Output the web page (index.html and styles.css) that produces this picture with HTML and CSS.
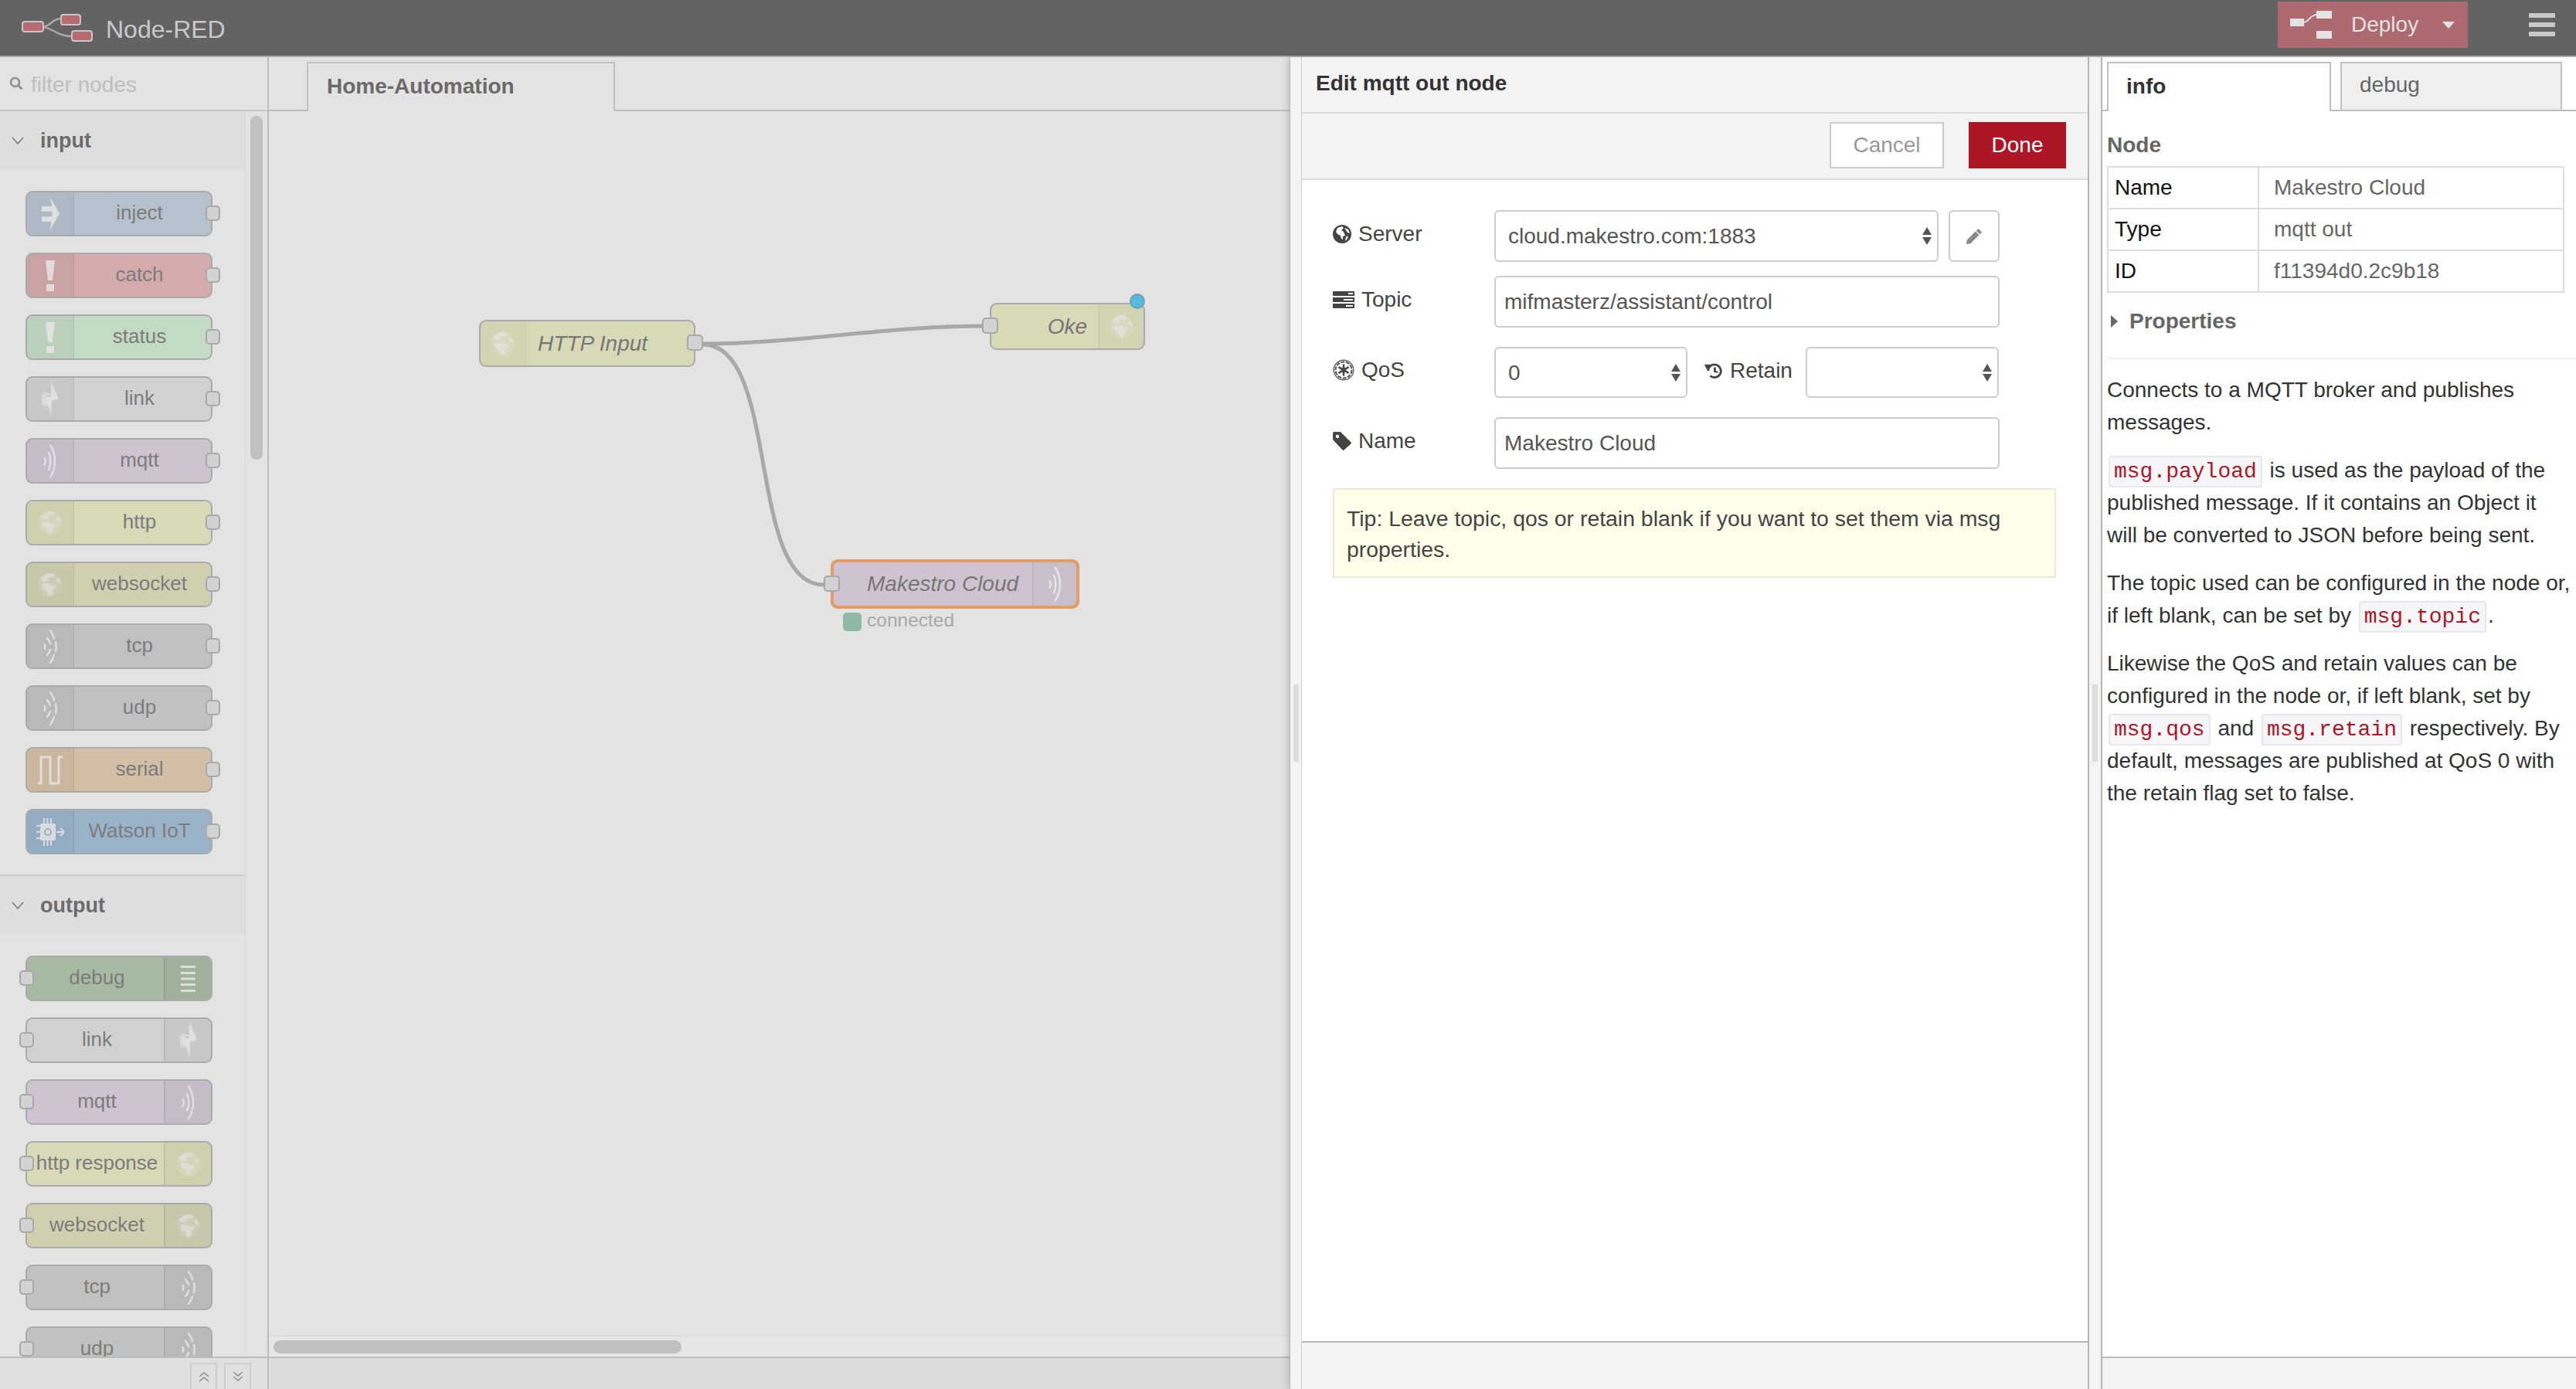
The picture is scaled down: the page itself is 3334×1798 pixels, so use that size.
FILE: index.html
```html
<!DOCTYPE html>
<html lang="en">

<head>
  <meta charset="UTF-8">
  <title>Node-RED</title>
  <link rel="stylesheet" href="styles.css">
</head>

<body>
  <!-- shared icons -->
  <svg class="sprites" aria-hidden="true">
    <symbol id="i-globe" viewBox="0 0 32 32">
      <circle cx="16" cy="16" r="15.500" opacity=".22" />
      <path opacity=".7" d="M15 1C9 2 5 5 3 9l3 2 5 1 3-2-2-3 5-1 4 1 1-4-3-2zM8 14l-3 2 1 5 5 2 2 5 2 3 4-3 1-6 3-2 1-4-5 1-3-2-5-1zM24 8l4 2 2 5-3-1-3-2z" />
    </symbol>
    <symbol id="i-inject" viewBox="0 0 24 46">
      <path d="M11 0l13 23-13 23 2-12H0v-7h14v-7H0v-7h14z" />
    </symbol>
    <symbol id="i-alert" viewBox="0 0 12 40">
      <path d="M0 0h12L9 26H3zM1 31h10v9H1z" />
    </symbol>
    <symbol id="i-link" viewBox="0 0 22 46">
      <path d="M12 0l10 22-9 3-1 21-4-17-3-1 2-2 0-2-2-1 3-3 4 0z" />
      <path d="M3 17a6 6 0 1 0 0 12 6 6 0 0 0 0-12z" opacity=".8" />
      <path d="M0 16l12 2v-2l-8-2zM0 30l12-2v2l-8 2z" opacity=".8" />
    </symbol>
    <symbol id="i-mqtt" viewBox="0 0 18 46">
      <g fill="none" stroke="currentColor" stroke-width="2.500" stroke-linecap="round">
        <path d="M9 2c8 12 8 30 0 42" />
        <path d="M7 12c3 7 3 15 0 22" />
        <path d="M1.500 19c2 3 2 6 0 9" />
      </g>
    </symbol>
    <symbol id="i-tcp" viewBox="0 0 18 46">
      <g fill="none" stroke="currentColor" stroke-width="2.500" stroke-linecap="round">
        <path d="M9 2c2 3 4 6 5 10M16 17c1 4 1 8 0 12M14 34c-1 4-3 7-5 10" />
        <path d="M5 12c2 2 3 4 4 7M9 27c-1 3-2 5-4 7" />
        <path d="M1.500 20c1 2 1 4 0 6" />
      </g>
    </symbol>
    <symbol id="i-serial" viewBox="0 0 32 38">
      <path d="M0 36h4V2h12v34h11V2h5" fill="none" stroke="currentColor" stroke-width="3" />
    </symbol>
    <symbol id="i-watson" viewBox="0 0 36 36">
      <g fill="none" stroke="currentColor" stroke-width="2">
        <path d="M10 0v7M14.500 0v7M19 0v7M10 29v7M14.500 29v7M19 29v7M0 10h5M0 18h5M0 26h5" />
        <path d="M26 18h9M31 13l5 5-5 5" />
      </g>
      <path d="M5 9a2 2 0 0 1 2-2h16a2 2 0 0 1 2 2v18a2 2 0 0 1-2 2H7a2 2 0 0 1-2-2z" />
      <circle cx="15" cy="18" r="4" fill="none" stroke="#9ab3c9" stroke-width="2" />
    </symbol>
    <symbol id="i-debug" viewBox="0 0 19 34">
      <path d="M0 0h19v3H0zM0 8h19v3H0zM0 15.500h19v3H0zM0 23h19v3H0zM0 31h19v3H0z" />
    </symbol>
  </svg>

  <div class="app">
    <header class="topbar">
      <div class="brand">
        <svg class="logo" viewBox="0 0 92 36">
          <path d="M26 17c12 0 12-11 26-11M26 17c14 0 18 12 40 12" fill="none" stroke="#a9a9a9" stroke-width="2.500" />
          <rect x="1" y="10" width="27" height="13" rx="3" fill="#b56b6f" stroke="#c6c6c6" stroke-width="2" />
          <rect x="51" y="1" width="25" height="13" rx="3" fill="#b56b6f" stroke="#c6c6c6" stroke-width="2" />
          <rect x="65" y="22" width="26" height="13" rx="3" fill="#b56b6f" stroke="#c6c6c6" stroke-width="2" />
        </svg>
        <span class="brand-name">Node-RED</span>
      </div>
      <div class="topbar-actions">
        <div class="deploy">
          <svg class="deploy-icon" viewBox="0 0 54 36">
            <path d="M16 15c10 0 8-10 20-10" fill="none" stroke="#e3e3e3" stroke-width="2" />
            <path d="M0 10h18v10H0zM34 0h20v10H34zM34 26h20v10H34z" fill="#e3e3e3" />
          </svg>
          <span class="deploy-label">Deploy</span>
          <span class="deploy-caret"></span>
        </div>
        <div class="menu-button"><span></span><span></span><span></span></div>
      </div>
    </header>

    <div class="columns">
      <aside class="palette">
        <div class="palette-search">
          <svg class="search-icon" viewBox="0 0 18 18">
            <circle cx="7.500" cy="7.500" r="5.500" fill="none" stroke="#8f8f8f" stroke-width="2.500" />
            <path d="M11.500 11.500l5 5" stroke="#8f8f8f" stroke-width="3" />
          </svg>
          <span class="search-text">filter nodes</span>
        </div>
        <div class="palette-scroll">
          <div class="palette-list">
            <div class="category">
              <svg class="chevron" viewBox="0 0 16 10"><path d="M1 1l7 8 7-8" /></svg>
              <span>input</span>
            </div>
            <div class="category-nodes">
              <div class="pnode in c-inject"><div class="pnode-icon"><svg class="ic-inject"><use href="#i-inject" /></svg></div><div class="pnode-label">inject</div><i class="port"></i></div>
              <div class="pnode in c-catch"><div class="pnode-icon"><svg class="ic-alert"><use href="#i-alert" /></svg></div><div class="pnode-label">catch</div><i class="port"></i></div>
              <div class="pnode in c-status"><div class="pnode-icon"><svg class="ic-alert"><use href="#i-alert" /></svg></div><div class="pnode-label">status</div><i class="port"></i></div>
              <div class="pnode in c-link"><div class="pnode-icon"><svg class="ic-link"><use href="#i-link" /></svg></div><div class="pnode-label">link</div><i class="port"></i></div>
              <div class="pnode in c-mqtt"><div class="pnode-icon"><svg class="ic-arcs"><use href="#i-mqtt" /></svg></div><div class="pnode-label">mqtt</div><i class="port"></i></div>
              <div class="pnode in c-http"><div class="pnode-icon"><svg class="ic-globe"><use href="#i-globe" /></svg></div><div class="pnode-label">http</div><i class="port"></i></div>
              <div class="pnode in c-socket"><div class="pnode-icon"><svg class="ic-globe"><use href="#i-globe" /></svg></div><div class="pnode-label">websocket</div><i class="port"></i></div>
              <div class="pnode in c-grey"><div class="pnode-icon"><svg class="ic-arcs"><use href="#i-tcp" /></svg></div><div class="pnode-label">tcp</div><i class="port"></i></div>
              <div class="pnode in c-grey"><div class="pnode-icon"><svg class="ic-arcs"><use href="#i-tcp" /></svg></div><div class="pnode-label">udp</div><i class="port"></i></div>
              <div class="pnode in c-serial"><div class="pnode-icon"><svg class="ic-serial"><use href="#i-serial" /></svg></div><div class="pnode-label">serial</div><i class="port"></i></div>
              <div class="pnode in c-watson"><div class="pnode-icon"><svg class="ic-watson"><use href="#i-watson" /></svg></div><div class="pnode-label">Watson IoT</div><i class="port"></i></div>
            </div>
            <div class="category category-next">
              <svg class="chevron" viewBox="0 0 16 10"><path d="M1 1l7 8 7-8" /></svg>
              <span>output</span>
            </div>
            <div class="category-nodes">
              <div class="pnode out c-debug"><i class="port"></i><div class="pnode-label">debug</div><div class="pnode-icon"><svg class="ic-debug"><use href="#i-debug" /></svg></div></div>
              <div class="pnode out c-link"><i class="port"></i><div class="pnode-label">link</div><div class="pnode-icon"><svg class="ic-link"><use href="#i-link" /></svg></div></div>
              <div class="pnode out c-mqtt"><i class="port"></i><div class="pnode-label">mqtt</div><div class="pnode-icon"><svg class="ic-arcs"><use href="#i-mqtt" /></svg></div></div>
              <div class="pnode out c-http"><i class="port"></i><div class="pnode-label">http response</div><div class="pnode-icon"><svg class="ic-globe"><use href="#i-globe" /></svg></div></div>
              <div class="pnode out c-socket"><i class="port"></i><div class="pnode-label">websocket</div><div class="pnode-icon"><svg class="ic-globe"><use href="#i-globe" /></svg></div></div>
              <div class="pnode out c-grey"><i class="port"></i><div class="pnode-label">tcp</div><div class="pnode-icon"><svg class="ic-arcs"><use href="#i-tcp" /></svg></div></div>
              <div class="pnode out c-grey"><i class="port"></i><div class="pnode-label">udp</div><div class="pnode-icon"><svg class="ic-arcs"><use href="#i-tcp" /></svg></div></div>
            </div>
          </div>
          <div class="palette-track"><div class="palette-thumb"></div></div>
        </div>
        <div class="palette-footer">
          <div class="mini-button"><svg viewBox="0 0 14 14"><path d="M1 7l6-5 6 5M1 13l6-5 6 5" /></svg></div>
          <div class="mini-button"><svg viewBox="0 0 14 14"><path d="M1 1l6 5 6-5M1 7l6 5 6-5" /></svg></div>
        </div>
      </aside>

      <main class="workspace">
        <div class="tabs workspace-tabs">
          <div class="tab workspace-tab">Home-Automation</div>
        </div>
        <div class="canvas">
          <svg class="wires">
            <path d="M562 301C680 301 800 278 923 278" />
            <path d="M562 302C662 302 618 613 718 613" />
          </svg>

          <div class="flow-node flow-http">
            <div class="flow-icon"><svg class="ic-globe"><use href="#i-globe" /></svg></div>
            <div class="flow-label">HTTP Input</div>
            <i class="port"></i>
          </div>

          <div class="flow-node flow-oke">
            <i class="port"></i>
            <div class="flow-label">Oke</div>
            <div class="flow-icon"><svg class="ic-globe"><use href="#i-globe" /></svg></div>
            <b class="changed-dot"></b>
          </div>

          <div class="flow-node flow-mqtt">
            <i class="port"></i>
            <div class="flow-label">Makestro Cloud</div>
            <div class="flow-icon"><svg class="ic-arcs"><use href="#i-mqtt" /></svg></div>
          </div>

          <div class="flow-status">
            <b class="status-dot"></b>
            <span>connected</span>
          </div>
        </div>
        <div class="canvas-scroll"><div class="canvas-thumb"></div></div>
        <div class="workspace-footer"></div>
      </main>

      <section class="tray">
        <div class="tray-edge"><div class="handle"></div></div>
        <div class="tray-main">
          <div class="tray-header">Edit mqtt out node</div>
          <div class="tray-toolbar">
            <button class="btn btn-cancel">Cancel</button>
            <button class="btn btn-done">Done</button>
          </div>
          <form class="tray-body">
            <div class="form-row row-server">
              <label class="form-label">
                <svg class="label-icon" viewBox="0 0 24 24">
                  <circle cx="12" cy="12" r="12" fill="#444" />
                  <path d="M6 4l6-2 2 2-3 3 3 2 2 5-3 1 0 4-2-1-1-4-4-2-2-3zM15 4l5 2 2 5-3-1zM17 16l3-2-1 4-3 3z" fill="#fff" />
                </svg>
                Server
              </label>
              <div class="select-wrap select-server">
                <select><option>cloud.makestro.com:1883</option></select>
              </div>
              <div class="edit-button">
                <svg viewBox="0 0 24 24"><path d="M18 1l5 5-3 3-5-5zM14 5l5 5L7 22l-6 1 1-6z" fill="#8a8a8a" /></svg>
              </div>
            </div>
            <div class="form-row row-topic">
              <label class="form-label">
                <svg class="label-icon icon-tasks" viewBox="0 0 28 22">
                  <path d="M1 0h26a1 1 0 0 1 1 1v5H0V1a1 1 0 0 1 1-1zM0 8h28v6H0zM0 16h28v5a1 1 0 0 1-1 1H1a1 1 0 0 1-1-1z" fill="#444" />
                  <path d="M20 2h6v2h-6zM14 10h12v2H14zM17 18h9v2h-9z" fill="#fff" />
                </svg>
                Topic
              </label>
              <input class="text-input" value="mifmasterz/assistant/control">
            </div>
            <div class="form-row row-qos">
              <label class="form-label">
                <svg class="label-icon icon-empire" viewBox="0 0 28 28">
                  <circle cx="14" cy="14" r="12.800" fill="none" stroke="#666" stroke-width="1.500" />
                  <circle cx="14" cy="14" r="10.500" fill="none" stroke="#555" stroke-width="2" stroke-dasharray="5 1.500" />
                  <path d="M14 6.500v15M7.500 10.200l13 7.600M20.500 10.200l-13 7.600" stroke="#444" stroke-width="2.500" />
                  <circle cx="14" cy="14" r="3" fill="#444" />
                </svg>
                QoS
              </label>
              <div class="select-wrap select-small">
                <select><option>0</option></select>
              </div>
              <label class="form-label label-retain">
                <svg class="label-icon" viewBox="0 0 26 24">
                  <path d="M5 12a9 9 0 1 1 3 7" fill="none" stroke="#444" stroke-width="3" />
                  <path d="M0 3l9 0-6 7zM13 7h3v6h-3z" fill="#444" />
                  <path d="M13 11l6 2v2l-6-1z" fill="#444" />
                </svg>
                Retain
              </label>
              <div class="select-wrap select-small">
                <select><option></option></select>
              </div>
            </div>
            <div class="form-row row-name">
              <label class="form-label">
                <svg class="label-icon" viewBox="0 0 24 24">
                  <path d="M0 2a2 2 0 0 1 2-2h8l13 13a2 2 0 0 1 0 3l-8 7a2 2 0 0 1-3 0L0 10z" fill="#444" />
                  <circle cx="6" cy="6" r="2.200" fill="#fff" />
                </svg>
                Name
              </label>
              <input class="text-input" value="Makestro Cloud">
            </div>
            <div class="form-tip">Tip: Leave topic, qos or retain blank if you want to set them via msg properties.</div>
          </form>
          <div class="tray-footer"></div>
        </div>
      </section>

      <div class="separator"><div class="handle"></div></div>

      <aside class="sidebar">
        <div class="tabs sidebar-tabs">
          <div class="tab info-tab">info</div>
          <div class="tab debug-tab">debug</div>
        </div>
        <div class="sidebar-content">
          <h3 class="info-heading">Node</h3>
          <table class="info-table">
            <tr><td>Name</td><td>Makestro Cloud</td></tr>
            <tr><td>Type</td><td>mqtt out</td></tr>
            <tr><td>ID</td><td>f11394d0.2c9b18</td></tr>
          </table>
          <div class="info-properties"><span class="arrow-right"></span>Properties</div>
          <div class="info-help">
            <p>Connects to a MQTT broker and publishes messages.</p>
            <p><code>msg.payload</code> is used as the payload of the published message. If it contains an Object it<br>will be converted to JSON before being sent.</p>
            <p>The topic used can be configured in the node or,<br>if left blank, can be set by <code>msg.topic</code>.</p>
            <p>Likewise the QoS and retain values can be configured in the node or, if left blank, set by <code>msg.qos</code> and <code>msg.retain</code> respectively. By default, messages are published at QoS 0 with the retain flag set to false.</p>
          </div>
        </div>
        <div class="sidebar-footer"></div>
      </aside>
    </div>
  </div>
</body>

</html>
```

FILE: styles.css
```css
/* Base */

* {
  box-sizing: border-box;
}

html,
body {
  margin: 0;
  height: 100%;
  overflow: hidden;
}

body {
  font-family: "Liberation Sans", Arial, sans-serif;
  font-size: 28px;
  color: #333;
  background: #e3e3e3;
}

.sprites {
  display: none;
}

.app {
  display: flex;
  flex-direction: column;
  height: 100vh;
}

/* Top bar */

.topbar {
  height: 74px;
  flex-shrink: 0;
  background: #636363;
  border-bottom: 2px solid #ababab;
  display: flex;
  justify-content: space-between;
  padding-left: 28px;
  padding-right: 27px;
}

.brand {
  display: flex;
  align-items: center;
  gap: 17px;
  color: #c9c9c9;
  font-size: 32px;
}

.brand-name {
  padding-top: 5px;
}

.logo {
  width: 92px;
  height: 36px;
}

.topbar-actions {
  display: flex;
  align-items: flex-start;
  gap: 79px;
}

.deploy {
  width: 246px;
  height: 60px;
  margin-top: 2px;
  background: #ad6a70;
  color: #e2e2e2;
  display: flex;
  align-items: center;
  padding-left: 16px;
}

.deploy-icon {
  width: 54px;
  height: 36px;
}

.deploy-label {
  margin-left: 25px;
}

.deploy-caret {
  margin-left: 31px;
  border-left: 8px solid transparent;
  border-right: 8px solid transparent;
  border-top: 9px solid #e2e2e2;
}

.menu-button {
  width: 34px;
  margin-top: 17px;
  display: flex;
  flex-direction: column;
  gap: 6px;
}

.menu-button span {
  height: 6px;
  border-radius: 1px;
  background: #c9c9c9;
}

.columns {
  flex: 1;
  min-height: 0;
  display: flex;
}

/* Palette */

.palette {
  width: 348px;
  flex-shrink: 0;
  display: flex;
  flex-direction: column;
  border-right: 2px solid #bdbdbd;
}

.palette-search {
  height: 70px;
  flex-shrink: 0;
  border-bottom: 2px solid #c6c6c6;
  display: flex;
  align-items: center;
  padding: 0 0 0 12px;
  gap: 10px;
}

.search-icon {
  width: 18px;
  height: 18px;
}

.search-text {
  padding-top: 4px;
  color: #bfbfbf;
}

.palette-scroll {
  flex: 1;
  min-height: 0;
  overflow: hidden;
  display: flex;
}

.palette-list {
  width: 317px;
  flex-shrink: 0;
}

.palette-track {
  flex: 1;
  border-left: 1px solid #dadada;
  padding: 6px 6px 0 6px;
}

.palette-thumb {
  height: 445px;
  border-radius: 8px;
  background: #c1c1c1;
}

.category {
  height: 76px;
  background: #dedede;
  display: flex;
  align-items: center;
  padding-left: 15px;
  font-size: 27px;
  font-weight: bold;
  color: #6c6c6c;
}

.category-next {
  height: 78px;
  margin-top: -1px;
  border-top: 2px solid #cdcdcd;
}

.chevron {
  width: 16px;
  height: 10px;
  margin-right: 21px;
  fill: none;
  stroke: #7c7c7c;
  stroke-width: 1.6;
}

.category-nodes {
  padding: 27px 0 27px 33px;
  display: flex;
  flex-direction: column;
  gap: 21px;
}

.pnode {
  position: relative;
  width: 242px;
  height: 59px;
  flex-shrink: 0;
  border: 2px solid #ababab;
  border-radius: 9px;
  display: flex;
  font-size: 26px;
  color: #7c7c7c;
}

.pnode-icon {
  width: 61px;
  flex-shrink: 0;
  display: flex;
  align-items: center;
  justify-content: center;
  background: rgba(0, 0, 0, 0.04);
  color: #e6e6e6;
  fill: #e6e6e6;
}

.pnode-icon svg {
  opacity: 0.85;
}

.pnode.in .pnode-icon {
  border-right: 1px solid rgba(0, 0, 0, 0.08);
  border-radius: 7px 0 0 7px;
}

.pnode.out .pnode-icon {
  border-left: 2px solid rgba(0, 0, 0, 0.08);
  border-radius: 0 7px 7px 0;
}

.pnode-label {
  flex: 1;
  min-width: 0;
  white-space: nowrap;
  display: flex;
  align-items: center;
  justify-content: center;
  padding-bottom: 2px;
}

.pnode.in .pnode-label {
  padding-right: 8px;
}

.pnode.out .pnode-label {
  padding-left: 4px;
}

.port {
  position: absolute;
  width: 19px;
  height: 20px;
  border: 2px solid #a9a9a9;
  border-radius: 5px;
  background: #d2d2d2;
}

.pnode .port {
  top: 17px;
}

.pnode.in .port {
  right: -12px;
}

.pnode.out .port {
  left: -10px;
}

.ic-inject {
  width: 23px;
  height: 45px;
}

.ic-alert {
  width: 12px;
  height: 40px;
}

.ic-link {
  width: 22px;
  height: 46px;
}

.ic-arcs {
  width: 18px;
  height: 46px;
}

.ic-globe {
  width: 32px;
  height: 32px;
}

.ic-serial {
  width: 32px;
  height: 38px;
}

.ic-watson {
  width: 36px;
  height: 36px;
}

.ic-debug {
  width: 19px;
  height: 34px;
}

.c-inject { background: #b5c1cd; }
.c-catch { background: #d4aaaa; }
.c-status { background: #c3dac3; }
.c-link { background: #d1d1d1; }
.c-mqtt { background: #cfc3d2; }
.c-http { background: #d8d9b6; }
.c-socket { background: #d0d0b0; }
.c-grey { background: #c1c1c1; }
.c-serial { background: #d3bfa5; }
.c-watson { background: #9ab3c9; }
.c-debug { background: #a7baa2; }

.palette-footer {
  height: 42px;
  flex-shrink: 0;
  border-top: 2px solid #bdbdbd;
  display: flex;
  justify-content: flex-end;
  gap: 9px;
  padding: 6px 21px 0 0;
  background: #e0e0e0;
}

.mini-button {
  width: 35px;
  border: 2px solid #cdcdcd;
  border-bottom: none;
  display: flex;
  align-items: center;
  justify-content: center;
}

.mini-button svg {
  width: 14px;
  height: 14px;
  fill: none;
  stroke: #8a8a8a;
  stroke-width: 1.5;
}

/* Tabs */

.tabs {
  height: 70px;
  flex-shrink: 0;
  padding-top: 6px;
  border-bottom: 2px solid #bdbdbd;
  display: flex;
}

.tab {
  height: 64px;
  border: 2px solid #c0c0c0;
  border-bottom: none;
}

.workspace-tabs {
  padding-left: 49px;
}

.workspace-tab {
  width: 399px;
  padding: 14px 0 0 24px;
  font-weight: bold;
  color: #6a6a6a;
  background: #e3e3e3;
}

/* Workspace */

.workspace {
  width: 1321px;
  flex-shrink: 0;
  display: flex;
  flex-direction: column;
}

.canvas {
  position: relative;
  flex: 1;
  min-height: 0;
}

.wires {
  position: absolute;
  left: 0;
  top: 0;
  width: 100%;
  height: 100%;
  fill: none;
  stroke: #a8a8a8;
  stroke-width: 5;
}

.flow-node {
  position: absolute;
  height: 61px;
  border: 2px solid #ababab;
  border-radius: 9px;
  display: flex;
  font-style: italic;
  color: #777;
}

.flow-icon {
  flex-shrink: 0;
  display: flex;
  align-items: center;
  justify-content: center;
  background: rgba(0, 0, 0, 0.02);
  fill: #e6e6e4;
  color: #e6e6e4;
}

.flow-label {
  flex: 1;
  display: flex;
  align-items: center;
  white-space: nowrap;
}

.flow-node .port {
  top: 17px;
  width: 21px;
  height: 21px;
}

.flow-http {
  left: 272px;
  top: 270px;
  width: 280px;
  background: #d8d9b6;
}

.flow-http .flow-icon {
  width: 59px;
  border-right: 1px solid rgba(0, 0, 0, 0.06);
}

.flow-http .flow-label {
  padding-left: 15px;
}

.flow-http .port {
  right: -12px;
}

.flow-oke {
  left: 933px;
  top: 248px;
  width: 201px;
  background: #d8d9b6;
}

.flow-oke .flow-icon {
  width: 58px;
  border-left: 1px solid rgba(0, 0, 0, 0.06);
}

.flow-oke .flow-label {
  justify-content: flex-end;
  padding-right: 15px;
}

.flow-oke .port {
  left: -12px;
}

.changed-dot {
  position: absolute;
  right: -2px;
  top: -14px;
  width: 20px;
  height: 20px;
  border: 2px solid #6fa3ba;
  border-radius: 50%;
  background: #59b9de;
}

.flow-mqtt {
  left: 727px;
  top: 580px;
  width: 322px;
  height: 64px;
  border: 4px solid #e39d63;
  background: #cfc3d2;
}

.flow-mqtt .flow-icon {
  width: 57px;
  border-left: 2px solid rgba(0, 0, 0, 0.05);
}

.flow-mqtt .flow-label {
  padding-left: 43px;
}

.flow-mqtt .port {
  left: -13px;
  top: 17px;
}

.flow-status {
  position: absolute;
  left: 743px;
  top: 647px;
  display: flex;
  align-items: center;
  gap: 7px;
  font-size: 24.500px;
  color: #a8a8a8;
}

.flow-status span {
  position: relative;
  top: -2px;
}

.status-dot {
  width: 24px;
  height: 24px;
  border-radius: 5px;
  background: #8fb9a5;
}

.canvas-scroll {
  height: 28px;
  flex-shrink: 0;
  border-top: 2px solid #dcdcdc;
  background: #e6e6e6;
  padding: 5px 0 0 6px;
}

.canvas-thumb {
  width: 528px;
  height: 17px;
  border-radius: 9px;
  background: #c0c0c0;
}

.workspace-footer {
  height: 42px;
  flex-shrink: 0;
  border-top: 2px solid #bdbdbd;
  background: #dcdcdc;
}

/* Edit tray */

.tray {
  width: 1035px;
  flex-shrink: 0;
  display: flex;
  border-left: 1px solid #b5b5b5;
  border-right: 2px solid #b5b5b5;
  background: #f3f3f3;
  box-shadow: -3px 0 8px rgba(0, 0, 0, 0.14);
}

.tray-edge,
.separator {
  display: flex;
  align-items: center;
  justify-content: center;
  flex-shrink: 0;
  background: #f3f3f3;
}

.tray-edge {
  width: 15px;
  border-right: 1px solid #d0d0d0;
}

.handle {
  width: 7px;
  height: 100px;
  background: #dcdcdc;
}

.tray-main {
  flex: 1;
  min-width: 0;
  display: flex;
  flex-direction: column;
}

.tray-header {
  height: 73px;
  flex-shrink: 0;
  padding: 18px 0 0 18px;
  border-bottom: 2px solid #dcdcdc;
  font-weight: bold;
}

.tray-toolbar {
  height: 86px;
  flex-shrink: 0;
  border-bottom: 2px solid #dcdcdc;
  display: flex;
  justify-content: flex-end;
  align-items: flex-start;
  gap: 32px;
  padding: 11px 28px 0 0;
}

.btn {
  height: 60px;
  font: inherit;
  border-radius: 0;
}

.btn-cancel {
  width: 148px;
  background: #fff;
  border: 2px solid #ccc;
  color: #999;
}

.btn-done {
  width: 126px;
  background: #ad1625;
  border: none;
  color: #fff;
}

.tray-body {
  flex: 1;
  min-height: 0;
  background: #fff;
  padding: 39px 0 0 40px;
}

.form-row {
  display: flex;
  align-items: center;
  width: 863px;
}

.row-server {
  height: 67px;
  margin-bottom: 18px;
}

.row-topic {
  height: 67px;
  margin-bottom: 25px;
}

.row-qos {
  height: 66px;
  margin-bottom: 25px;
}

.row-name {
  height: 67px;
  margin-bottom: 25px;
}

.form-label {
  width: 209px;
  flex-shrink: 0;
  display: flex;
  align-items: center;
  gap: 9px;
  padding-bottom: 6px;
  color: #444;
}

.label-icon {
  width: 24px;
  height: 24px;
  flex-shrink: 0;
}

.icon-tasks {
  width: 28px;
  height: 22px;
}

.icon-empire {
  width: 28px;
  height: 28px;
}

.label-retain {
  width: auto;
  margin: 0 17px 0 22px;
  padding-bottom: 4px;
}

.select-wrap {
  position: relative;
  height: 100%;
}

.select-wrap::before,
.select-wrap::after {
  content: "";
  position: absolute;
  right: 9px;
  border-left: 6.500px solid transparent;
  border-right: 6.500px solid transparent;
}

.select-wrap::before {
  top: 22px;
  border-bottom: 10px solid #555;
}

.select-wrap::after {
  top: 35px;
  border-top: 10px solid #555;
}

.select-wrap select,
.text-input {
  width: 100%;
  height: 100%;
  font: inherit;
  color: #555;
  background: #fff;
  border: 2px solid #ccc;
  border-radius: 6px;
  outline: none;
}

.select-wrap select {
  appearance: none;
  padding: 0 0 0 16px;
}

.text-input {
  flex: 1;
  min-width: 0;
  padding: 0 0 0 11px;
}

.select-server {
  width: 575px;
}

.select-small {
  width: 250px;
}

.edit-button {
  width: 66px;
  height: 100%;
  margin-left: 13px;
  border: 2px solid #ccc;
  border-radius: 6px;
  display: flex;
  align-items: center;
  justify-content: center;
}

.edit-button svg {
  width: 22px;
  height: 22px;
}

.form-tip {
  width: 936px;
  height: 116px;
  border: 2px solid #e9e9dc;
  background: #ffffea;
  padding: 17px 16px 0 16px;
  font-size: 28.400px;
  line-height: 40px;
  color: #444;
}

.tray-footer {
  height: 62px;
  flex-shrink: 0;
  border-top: 2px solid #b8b8b8;
}

.separator {
  width: 15px;
}

/* Sidebar */

.sidebar {
  flex: 1;
  min-width: 0;
  display: flex;
  flex-direction: column;
  background: #fff;
  border-left: 2px solid #b5b5b5;
}

.sidebar-tabs {
  background: #fff;
  padding-left: 6px;
}

.info-tab {
  width: 290px;
  height: 64px;
  background: #fff;
  padding: 14px 0 0 23px;
  font-weight: bold;
}

.debug-tab {
  width: 287px;
  height: 62px;
  margin-left: 12px;
  background: #efefef;
  padding: 12px 0 0 23px;
  color: #666;
}

.sidebar-content {
  flex: 1;
  min-height: 0;
  overflow: hidden;
  padding: 0 0 0 6px;
}

.info-heading {
  margin: 28px 0 11px;
  font-size: 28px;
  line-height: 32px;
  color: #666;
}

.info-table {
  width: 592px;
  border-collapse: collapse;
  border: 2px solid #ddd;
}

.info-table td {
  height: 54px;
  padding: 0 0 0 8px;
  border: 2px solid #ddd;
  color: #666;
}

.info-table td:first-child {
  width: 195px;
  color: #111;
}

.info-table td:last-child {
  padding-left: 19px;
}

.info-properties {
  display: flex;
  align-items: center;
  height: 32px;
  margin-top: 21px;
  font-weight: bold;
  color: #666;
}

.arrow-right {
  margin: 0 15px 0 5px;
  border-top: 8px solid transparent;
  border-bottom: 8px solid transparent;
  border-left: 9px solid #666;
}

.info-help {
  margin-top: 31px;
  border-top: 2px solid #eee;
  padding-top: 19px;
  width: 608px;
  line-height: 42px;
}

.info-help p {
  margin: 0 0 20px;
}

code {
  font-family: "Liberation Mono", "Courier New", monospace;
  font-size: 28px;
  line-height: 1;
  color: #ad1625;
  background: #f6f6f9;
  border: 2px solid #e6e6ec;
  border-radius: 4px;
  padding: 3px 5px;
  margin: 0 2px;
}

.sidebar-footer {
  height: 42px;
  flex-shrink: 0;
  border-top: 2px solid #bdbdbd;
  background: #f3f3f3;
}
```
